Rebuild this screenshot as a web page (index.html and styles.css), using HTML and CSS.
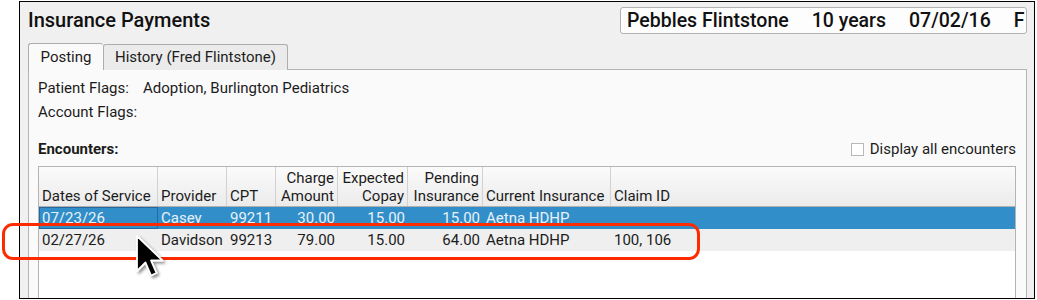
FILE: index.html
```html
<!DOCTYPE html>
<html>
<head>
<meta charset="utf-8">
<link rel="stylesheet" href="styles.css">
</head>
<body>
<div class="window">
  <div class="header">
    <h1 class="title">Insurance Payments</h1>
    <div class="patient"><span>Pebbles Flintstone</span><span>10 years</span><span>07/02/16</span><span>F</span></div>
  </div>
  <div class="tabs">
    <div class="tab active">Posting</div>
    <div class="tab">History (Fred Flintstone)</div>
  </div>
  <div class="panel">
    <div class="flags">
      <div class="flag-row"><span class="flag-label">Patient Flags:</span><span>Adoption, Burlington Pediatrics</span></div>
      <div class="flag-row"><span class="flag-label">Account Flags:</span></div>
    </div>
    <div class="enc-bar">
      <span class="enc-title">Encounters:</span>
      <label class="check"><span class="box"></span>Display all encounters</label>
    </div>
    <div class="grid">
      <div class="thead">
        <div class="th">Dates of Service</div>
        <div class="th">Provider</div>
        <div class="th">CPT</div>
        <div class="th num">Charge<br>Amount</div>
        <div class="th num">Expected<br>Copay</div>
        <div class="th num">Pending<br>Insurance</div>
        <div class="th">Current Insurance</div>
        <div class="th last">Claim ID</div>
      </div>
      <div class="row selected">
        <div class="td focus">07/23/26</div>
        <div class="td">Casey</div>
        <div class="td">99211</div>
        <div class="td num">30.00</div>
        <div class="td num">15.00</div>
        <div class="td num">15.00</div>
        <div class="td">Aetna HDHP</div>
        <div class="td"></div>
      </div>
      <div class="row alt">
        <div class="td">02/27/26</div>
        <div class="td">Davidson</div>
        <div class="td">99213</div>
        <div class="td num">79.00</div>
        <div class="td num">15.00</div>
        <div class="td num">64.00</div>
        <div class="td">Aetna HDHP</div>
        <div class="td">100, 106</div>
      </div>
    </div>
  </div>
</div>
<div class="highlight"></div>
<svg class="cursor" width="34" height="52" viewBox="0 0 34 52">
  <defs>
    <filter id="sh" x="-50%" y="-50%" width="200%" height="200%">
      <feGaussianBlur in="SourceAlpha" stdDeviation="1.8"/>
      <feOffset dx="2" dy="2" result="b"/>
      <feComponentTransfer><feFuncA type="linear" slope="0.45"/></feComponentTransfer>
      <feMerge><feMergeNode/><feMergeNode in="SourceGraphic"/></feMerge>
    </filter>
  </defs>
  <path filter="url(#sh)" d="M3 2 L3 37 L11.5 28.5 L17 41.5 L22.5 39 L17 26.5 L28.5 26.5 Z" fill="#000" stroke="#fff" stroke-width="1.8" stroke-linejoin="round"/>
</svg>
</body>
</html>
```

FILE: styles.css
```css
* { box-sizing: border-box; }
html, body { margin: 0; padding: 0; background: #ffffff; }
body {
  font-family: Roboto, "Liberation Sans", sans-serif;
  font-size: 15px;
  color: #1c1c1c;
  position: relative;
  width: 1037px;
  height: 300px;
  overflow: hidden;
}
.window {
  margin: 1px 0 0 19px;
  width: 1016px;
  height: 298px;
  border: 1px solid #000;
  background: #f0f0f0;
  overflow: hidden;
}
.header {
  display: flex;
  justify-content: space-between;
  align-items: center;
  padding: 5px 7px 0 8px;
}
.title {
  margin: 0;
  font-size: 20px;
  font-weight: 500;
  line-height: 27px;
  color: #111;
}
.patient {
  display: flex;
  gap: 23px;
  width: 407px;
  height: 27px;
  align-items: center;
  padding: 0 6px;
  background: #fdfdfd;
  border: 1px solid #b2b2b2;
  border-radius: 3px;
  font-size: 19.5px;
  font-weight: 500;
  color: #111;
  white-space: nowrap;
}
.tabs {
  display: flex;
  align-items: flex-end;
  height: 28px;
  margin: 8px 0 0 8px;
}
.tab {
  height: 26px;
  line-height: 25px;
  padding: 0;
  width: 185px;
  text-align: center;
  white-space: nowrap;
  background: #ebebeb;
  border: 1px solid #adadad;
  border-bottom: none;
  border-radius: 3px 3px 0 0;
}
.tab.active {
  position: relative;
  z-index: 1;
  width: 75px;
  height: 28px;
  line-height: 27px;
  background: #fafafa;
  border-right: none;
  margin-bottom: -1px;
}
.panel {
  margin: -1px 7px 0 8px;
  height: 240px;
  background: #fafafa;
  border: 1px solid #b4b4b4;
  padding: 6px 10px 0 9px;
}
.flag-row {
  display: flex;
  height: 24px;
  line-height: 24px;
}
.flag-label { width: 105px; }
.enc-bar {
  display: flex;
  justify-content: space-between;
  align-items: center;
  height: 24px;
  margin-top: 13px;
}
.enc-title { font-weight: 700; }
.check {
  display: flex;
  align-items: center;
  gap: 6px;
}
.box {
  width: 13px;
  height: 13px;
  background: #fff;
  border: 1px solid #b8b8b8;
}
.grid {
  margin-top: 5px;
  width: 978px;
  height: 140px;
  border: 1px solid #b4b4b4;
  background: #fff;
}
.thead, .row {
  display: grid;
  grid-template-columns: 119px 69px 49px 62px 70px 75px 128px 1fr;
}
.thead {
  height: 40px;
  border-bottom: 1px solid #b0b0b0;
  background: linear-gradient(#fbfbfb, #ebebeb);
}
.th {
  display: flex;
  flex-direction: column;
  justify-content: flex-end;
  line-height: 18px;
  padding: 0 3px 1px;
  border-right: 1px solid #d2d2d2;
  white-space: nowrap;
}
.th.last { border-right: none; }
.num { text-align: right; }
.row { height: 22px; line-height: 22px; }
.td { padding: 0 3px; white-space: nowrap; }
.row.selected { background: #318ec8; color: #e8f1f9; }
.td.focus { outline: 1px solid #2567a0; outline-offset: -1px; }
.row.alt { background: #efefef; }
.highlight {
  position: absolute;
  left: 2px;
  top: 223px;
  width: 698px;
  height: 37px;
  border: 3px solid #ff2b00;
  border-radius: 11px;
}
.cursor {
  position: absolute;
  left: 134px;
  top: 234px;
}
```
